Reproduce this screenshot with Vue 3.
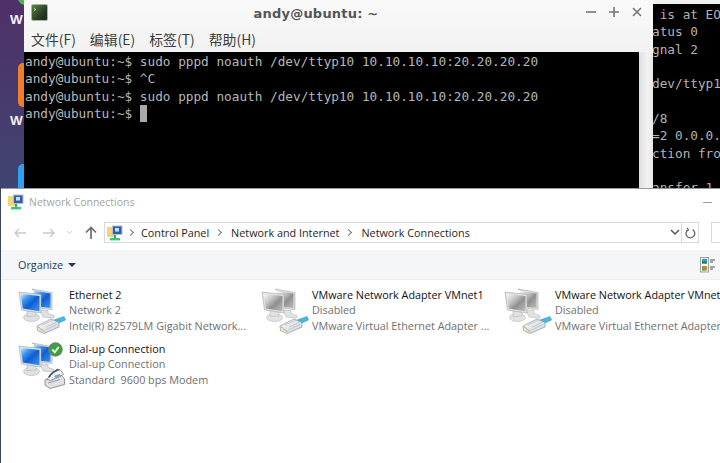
<script setup>
const termLines = [
  'andy@ubuntu:~$ sudo pppd noauth /dev/ttyp10 10.10.10.10:20.20.20.20',
  'andy@ubuntu:~$ ^C',
  'andy@ubuntu:~$ sudo pppd noauth /dev/ttyp10 10.10.10.10:20.20.20.20',
]
const backLines = [' is at EO', 'atus 0', 'gnal 2', '', 'dev/ttyp1', '', '/8', '=2 0.0.0.', 'ction fro', '', 'ansfer 1']
const connections = [
  { id: 'eth', name: 'Ethernet 2', status: 'Network 2', device: 'Intel(R) 82579LM Gigabit Network...', kind: 'eth', on: true },
  { id: 'vm1', name: 'VMware Network Adapter VMnet1', status: 'Disabled', device: 'VMware Virtual Ethernet Adapter ...', kind: 'eth', on: false },
  { id: 'vm8', name: 'VMware Network Adapter VMnet8', status: 'Disabled', device: 'VMware Virtual Ethernet Adapter ...', kind: 'eth', on: false },
  { id: 'dial', name: 'Dial-up Connection', status: 'Dial-up Connection', device: 'Standard  9600 bps Modem', kind: 'modem', on: true },
]
</script>

<template>
  <div class="desktop">
    <div class="launcher">
      <i class="tile green"></i>
      <span class="w w1">W</span>
      <i class="tile orange"></i>
      <span class="w w2">W</span>
      <i class="tile blue"></i>
    </div>

    <div class="backterm">
      <div class="backtext">
        <div v-for="(l, i) in backLines" :key="i" class="bline">{{ l }}</div>
      </div>
    </div>

    <section class="term">
      <header class="term-title">
        <svg class="term-icon" width="17" height="17" viewBox="0 0 17 17">
          <defs>
            <linearGradient id="tg" x1="0" y1="0" x2="1" y2="1">
              <stop offset="0" stop-color="#5f8a45" />
              <stop offset="0.6" stop-color="#2a3d28" />
              <stop offset="1" stop-color="#1a261c" />
            </linearGradient>
            <linearGradient id="scr" x1="0" y1="0" x2="1" y2="1">
              <stop offset="0" stop-color="#d8f0ff" />
              <stop offset="0.28" stop-color="#3f98f0" />
              <stop offset="0.55" stop-color="#0f5ed2" />
              <stop offset="1" stop-color="#3f95ee" />
            </linearGradient>
            <linearGradient id="scroff" x1="0" y1="0" x2="1" y2="1">
              <stop offset="0" stop-color="#fbfbfb" />
              <stop offset="0.35" stop-color="#c6c6c6" />
              <stop offset="0.6" stop-color="#8f8f8f" />
              <stop offset="1" stop-color="#bdbdbd" />
            </linearGradient>
            <linearGradient id="plug" x1="0" y1="0" x2="1" y2="1">
              <stop offset="0" stop-color="#fafbfc" />
              <stop offset="1" stop-color="#ccd3d8" />
            </linearGradient>
          </defs>
          <rect x="0.500" y="0.500" width="16" height="16" rx="1.500" fill="url(#tg)" stroke="#a8b3a0" />
          <path d="M3 4.500l2 1-2 1" fill="none" stroke="#cfe3bd" stroke-width=".8" />
        </svg>
        <span class="term-name">andy@ubuntu: ~</span>
        <div class="term-btns">
          <svg width="10" height="10" viewBox="0 0 10 10"><path d="M0 5h10" stroke="#777" stroke-width="1.600" /></svg>
          <svg width="10" height="10" viewBox="0 0 10 10"><path d="M0 5h10M5 0v10" stroke="#777" stroke-width="1.600" /></svg>
          <svg width="10" height="10" viewBox="0 0 10 10"><path d="M1 1l8 8M9 1l-8 8" stroke="#777" stroke-width="1.600" /></svg>
        </div>
      </header>
      <nav class="term-menu">
        <span>文件(F)</span><span>编辑(E)</span><span>标签(T)</span><span>帮助(H)</span>
      </nav>
      <div class="term-body">
        <div class="term-screen">
          <div v-for="(l, i) in termLines" :key="i" class="tline">{{ l }}</div>
          <div class="tline">andy@ubuntu:~$ <b class="cursor"></b></div>
        </div>
        <div class="term-scroll"></div>
      </div>
    </section>

    <section class="win">
      <header class="win-title">
        <svg class="netfolder" width="16" height="16" viewBox="0 0 16 16">
          <symbol id="netf" viewBox="0 0 16 16">
            <rect x="0" y="2" width="8" height="10" fill="#f2d675" />
            <rect x="5" y="0.500" width="10.500" height="9.500" fill="#b9bfc6" />
            <rect x="6" y="1.500" width="8.500" height="7.500" fill="#2a5fb5" />
            <rect x="8" y="3" width="4" height="3.500" fill="#cfe0f7" />
            <rect x="7" y="10" width="2" height="3" fill="#27ae60" />
            <rect x="3" y="13" width="10" height="2.400" fill="#2ecc71" />
          </symbol>
          <use href="#netf" />
        </svg>
        <span class="win-name">Network Connections</span>
        <span class="win-min"></span>
      </header>

      <div class="addr-row">
        <svg width="14" height="12" viewBox="0 0 14 12" class="nav first"><path d="M13 6H2M6 2L2 6l4 4" fill="none" stroke="#c9c9c9" stroke-width="1.400" /></svg>
        <svg width="14" height="12" viewBox="0 0 14 12" class="nav second"><path d="M1 6h11M8 2l4 4-4 4" fill="none" stroke="#c9c9c9" stroke-width="1.400" /></svg>
        <svg width="7" height="5" viewBox="0 0 7 5" class="nav third"><path d="M1 1l2.500 2.500L6 1" fill="none" stroke="#d0d0d0" /></svg>
        <svg width="12" height="13" viewBox="0 0 12 13" class="nav up"><path d="M6 13V2M1 6.500L6 1.500l5 5" fill="none" stroke="#6d6d6d" stroke-width="1.700" /></svg>

        <div class="addr">
          <svg class="netfolder" width="16" height="16" viewBox="0 0 16 16"><use href="#netf" /></svg>
          <span class="crumb-sep first-sep"></span><span class="crumb">Control Panel</span>
          <span class="crumb-sep"></span><span class="crumb">Network and Internet</span>
          <span class="crumb-sep"></span><span class="crumb">Network Connections</span>
          <svg class="addr-drop" width="10" height="7" viewBox="0 0 10 7"><path d="M1 1l4 4 4-4" fill="none" stroke="#555" stroke-width="1.500" /></svg>
          <div class="addr-refresh">
            <svg width="11" height="12" viewBox="0 0 11 12"><path d="M7.600 2.600A4.400 4.400 0 1 1 3 2.700" fill="none" stroke="#666" stroke-width="1.300" /><path d="M2 .8l1.600 2.200L1.200 4" fill="none" stroke="#666" stroke-width="1.100" /></svg>
          </div>
        </div>
        <div class="search"></div>
      </div>

      <div class="toolbar">
        <span class="organize">Organize</span>
        <i class="caret"></i>
        <svg class="viewicon" width="16" height="16" viewBox="0 0 16 16">
          <rect x="0.500" y="0.500" width="8" height="14.500" fill="#f4f6f8" stroke="#9aa3ad" />
          <rect x="2" y="2" width="5" height="4.500" fill="#3f8fd0" />
          <rect x="2" y="4.500" width="5" height="2" fill="#2e7d32" />
          <rect x="2" y="9" width="5" height="4.500" fill="#d9822b" />
          <rect x="2" y="11" width="3" height="2.500" fill="#5aa84a" />
          <path d="M10 3h5M10 5h3M10 10h5M10 12h3" stroke="#555" />
        </svg>
      </div>

      <div class="items">
        <article v-for="c in connections" :key="c.id" class="item">
          <div class="ico">
            <svg width="50" height="48" viewBox="3 3 50 48">
              <g :class="c.on ? 'pc-on' : 'pc-off'">
                <path d="M26 25l8 .5v3l6 2v2.500l-11-1z" class="base" />
                <path d="M18 4l20 3.500V24.500L28 23.500V10z" class="bezel" />
                <path d="M19.500 5.500l17 3v14.500l-17-2z" class="screen" :fill="c.on ? 'url(#scr)' : 'url(#scroff)'" />
                <ellipse cx="17.500" cy="32.500" rx="8" ry="4" class="base" />
                <path d="M13 25h9v6l-9 .5z" class="base" />
                <path d="M5 7l22 2.500V28L7.500 25z" class="bezel" />
                <path d="M6.500 8.800l19 2.200v15.200L8.800 23.500z" class="screen" :fill="c.on ? 'url(#scr)' : 'url(#scroff)'" />
              </g>
              <g v-if="c.kind === 'eth'">
                <path d="M40 35l10-3.500 1.500 3.500-9 4z" fill="#45b8ea" stroke="#2389bd" stroke-width=".5" />
                <path d="M23 41l14-7 8 3.500v4.500l-15 6.500-6.500-3z" fill="url(#plug)" stroke="#8b949a" stroke-width=".7" />
                <path d="M28 40l11-5M32 42l10-4.500M31 45l12-5.500" stroke="#b2bac0" stroke-width=".7" />
                <path d="M24 42l2.500 1.500M26.500 44l2.500 1.500M29 45.500l1.500 1" stroke="#c4a544" stroke-width="1" />
              </g>
              <g v-else>
                <path d="M31 41l16-5 3.500 4v5.500L36 49.500l-5-3.500z" fill="#dfe3e6" stroke="#666c71" stroke-width=".7" />
                <path d="M33 40l10-10 3.500 1 3 4.500-3 1.500-10 4.500z" fill="#f3f5f7" stroke="#666c71" stroke-width=".7" />
                <path d="M34 38c1.500-3 5-6.500 10-8l1.500 1.200c-4.500 1.300-8 4-9.800 7.500z" fill="#50575c" />
                <path d="M40 37l5.500-2.300 2 2.500-5.500 2.600z" fill="#8aa5b8" />
                <path d="M34 44l12-3.500" stroke="#8d9398" stroke-width=".9" />
              </g>
              <g v-if="c.kind === 'modem'">
                <circle cx="41.500" cy="10.500" r="7.200" fill="#767a7d" />
                <circle cx="41.500" cy="10.500" r="5.800" fill="#36a531" />
                <path d="M38.300 10.500l2.400 2.800 4-5.300" fill="none" stroke="#fff" stroke-width="1.800" />
              </g>
            </svg>
          </div>
          <div class="info">
            <div class="nm">{{ c.name }}</div>
            <div class="sub">{{ c.status }}</div>
            <div class="sub">{{ c.device }}</div>
          </div>
        </article>
      </div>
    </section>
  </div>
</template>

<style>
html, body { margin: 0; padding: 0; overflow: hidden; background: #fff; }
</style>

<style scoped>
.desktop {
  position: relative;
  width: 720px;
  height: 463px;
  overflow: hidden;
  background: #3c4468;
}
.launcher {
  position: absolute;
  left: 0;
  top: 0;
  width: 24px;
  height: 189px;
  background: linear-gradient(#4f3068, #3f4470);
  overflow: hidden;
}
.tile { position: absolute; border-radius: 5px; width: 14px; }
.green { left: 18px; top: -10px; height: 15px; background: #48b84d; border-radius: 8px; }
.orange { left: 18px; top: 63px; height: 44px; background: #f07d2b; }
.blue { left: 18px; top: 164px; height: 30px; background: #2f9ef5; }
.w {
  position: absolute;
  left: 10px;
  font: 700 13.500px "Liberation Sans", sans-serif;
  color: #f2f0f5;
}
.w1 { top: 12px; }
.w2 { top: 113px; }

.backterm {
  position: absolute;
  left: 653px;
  top: 0;
  width: 67px;
  height: 189px;
  background: #000;
  border-top: 4px solid #f0f0f0;
  box-sizing: border-box;
  overflow: hidden;
}
.backtext {
  margin: 2px 0 0 -1px;
  font: 12.720px/17.350px "DejaVu Sans Mono", monospace;
  color: #b4b4b4;
  white-space: pre;
}
.bline { min-height: 17.350px; }

.term {
  position: absolute;
  left: 24px;
  top: 0;
  width: 629px;
  height: 189px;
  display: flex;
  flex-direction: column;
  background: linear-gradient(#fafafa, #dcdcdc);
}
.term-title {
  height: 26px;
  display: flex;
  align-items: center;
  position: relative;
  flex: none;
  padding-right: 45px;
}
.term-icon { position: absolute; top: 4px; left: 7px; }
.term-name {
  flex: 1;
  text-align: center;
  font: 700 13px "DejaVu Sans", sans-serif;
  color: #555;
  letter-spacing: 0.2px;
}
.term-btns {
  position: absolute;
  right: 11px;
  top: 7px;
  display: flex;
  gap: 13px;
}
.term-menu {
  height: 25px;
  display: flex;
  gap: 14px;
  padding-left: 7px;
  align-items: center;
  font: 13.900px "Noto Sans CJK SC", "Noto Sans", sans-serif;
  color: #3c3c3c;
  flex: none;
  border-bottom: 1px solid #f4f4f4;
}
.term-body { flex: 1; display: flex; min-height: 0; }
.term-screen {
  flex: 1;
  background: #000;
  padding: 1px 0 0 1px;
  color: #b8b8b8;
  font: 12.720px/17.350px "DejaVu Sans Mono", monospace;
  white-space: pre;
}
.tline { height: 17.350px; }
.cursor {
  display: inline-block;
  width: 7px;
  height: 17px;
  background: #a9a9a9;
  vertical-align: -4px;
}
.term-scroll {
  width: 14px;
  background: linear-gradient(90deg, #dedede, #f3f3f3 60%, #e6e6e6);
  border-radius: 4px 4px 0 0;
}

.win {
  position: absolute;
  left: 1px;
  top: 188px;
  right: 0;
  bottom: 0;
  background: #fff;
  border-top: 1px solid #9a9a9a;
  font-family: "Open Sans", "Noto Sans", sans-serif;
  display: flex;
  flex-direction: column;
}
.win-title {
  height: 26px;
  display: flex;
  align-items: center;
  padding-left: 7px;
  position: relative;
  flex: none;
}
.win-name { margin-left: 5px; font-size: 10.500px; color: #a3a3a3; }
.win-min {
  position: absolute;
  right: 8px;
  top: 13px;
  width: 9px;
  height: 1px;
  background: #9c9c9c;
}
.addr-row {
  height: 35px;
  display: flex;
  align-items: center;
  flex: none;
}
.nav { flex: none; }
.first { margin-left: 12px; }
.second { margin-left: 15px; }
.third { margin-left: 10px; }
.up { margin-left: 12px; }
.addr {
  margin-left: 7px;
  width: 595px;
  height: 21px;
  border: 1px solid #d9d9d9;
  box-sizing: border-box;
  display: flex;
  align-items: center;
  padding-left: 2px;
  position: relative;
  flex: none;
}
.crumb { font-size: 10.800px; color: #1e1e1e; white-space: nowrap; }
.crumb-sep {
  width: 4px;
  height: 4px;
  border-top: 1px solid #777;
  border-right: 1px solid #777;
  transform: rotate(45deg);
  margin: 0 10px 0 7px;
  flex: none;
}
.first-sep { margin: 0 8px 0 5px; }
.addr-drop { position: absolute; right: 18px; top: 6px; }
.addr-refresh {
  position: absolute;
  right: 0;
  top: 0;
  bottom: 0;
  width: 16px;
  border-left: 1px solid #d9d9d9;
  display: flex;
  align-items: center;
  justify-content: center;
}
.search {
  margin-left: 12px;
  width: 40px;
  height: 21px;
  border: 1px solid #d9d9d9;
  box-sizing: border-box;
  flex: none;
}
.toolbar {
  height: 30px;
  background: #f5f6f7;
  border-bottom: 1px solid #eceded;
  display: flex;
  align-items: center;
  padding-left: 17px;
  position: relative;
  flex: none;
  box-sizing: border-box;
}
.organize { font-size: 10.800px; color: #1f3b57; }
.caret {
  margin-left: 5px;
  border-left: 4px solid transparent;
  border-right: 4px solid transparent;
  border-top: 4px solid #1f3b57;
}
.viewicon { position: absolute; right: 4px; top: 7px; }
.items {
  display: grid;
  grid-template-columns: repeat(3, 243px);
  grid-auto-rows: 54px;
  padding: 7px 0 0 16px;
  overflow: hidden;
}
.item {
  display: flex;
  align-items: flex-start;
  width: 243px;
  white-space: nowrap;
}
.ico { width: 52px; flex: none; height: 48px; margin-top: 1px; }
.info { font-size: 10.800px; line-height: 15.300px; white-space: pre; }
.nm { color: #111; }
.sub { color: #6f6f6f; }
.bezel { fill: #dde1e5; stroke: #9aa2aa; stroke-width: .6; }
.base { fill: #dfe2e5; stroke: #a2a8ad; stroke-width: .5; }
.pc-off .bezel { fill: #e2e2e2; stroke: #a6a6a6; }
.pc-off .base { fill: #e2e2e2; stroke: #b0b0b0; }
</style>
